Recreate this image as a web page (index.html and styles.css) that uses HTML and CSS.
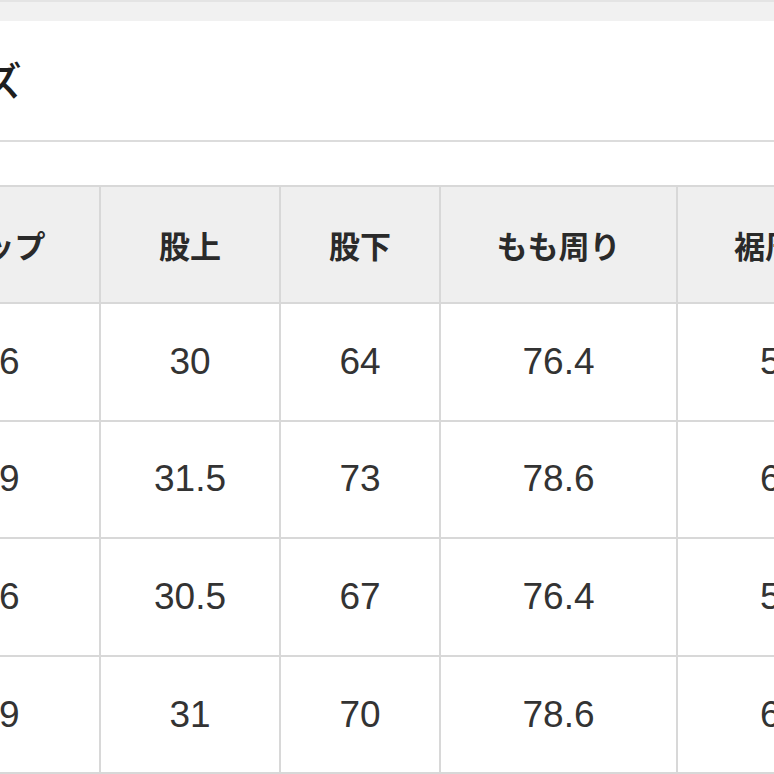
FILE: index.html
```html
<!DOCTYPE html>
<html lang="ja">
<head>
<meta charset="utf-8">
<link rel="stylesheet" href="styles.css">
</head>
<body>
<div class="page">
  <div class="topbar"></div>
  <div class="title-bar">
    <h2 class="title">サイズ</h2>
  </div>
  <div class="spacer"></div>
  <table class="size-table">
    <colgroup>
      <col class="c1"><col class="c2"><col class="c3"><col class="c4"><col class="c5">
    </colgroup>
    <thead>
      <tr><th>ヒップ</th><th>股上</th><th>股下</th><th>もも周り</th><th>裾周り</th></tr>
    </thead>
    <tbody>
      <tr><td>96</td><td>30</td><td>64</td><td>76.4</td><td>58</td></tr>
      <tr><td>99</td><td>31.5</td><td>73</td><td>78.6</td><td>62</td></tr>
      <tr><td>96</td><td>30.5</td><td>67</td><td>76.4</td><td>58</td></tr>
      <tr><td>99</td><td>31</td><td>70</td><td>78.6</td><td>62</td></tr>
    </tbody>
  </table>
</div>
</body>
</html>
```

FILE: styles.css
```css
html, body {
  margin: 0;
  padding: 0;
  background: #ffffff;
}
body {
  width: 774px;
  height: 774px;
  overflow: hidden;
  font-family: "Liberation Sans", "Noto Sans CJK JP", sans-serif;
  color: #2e2e2e;
}
.page {
  width: 774px;
}
.topbar {
  height: 19px;
  background: #f1f1f1;
  border-top: 2px solid #e4e4e4;
}
.title-bar {
  height: 119px;
  display: flex;
  align-items: center;
  border-bottom: 2px solid #dcdcdc;
}
.title {
  margin: -4px 0 0 -97px;
  font-size: 40px;
  font-weight: 500;
  color: #1e1e1e;
  font-family: "Noto Sans CJK JP", sans-serif;
  line-height: 1;
}
.spacer {
  height: 43px;
}
.size-table {
  border-collapse: collapse;
  table-layout: fixed;
  margin-left: -103px;
  width: 986px;
}
.c1 { width: 202px; }
.c2 { width: 180px; }
.c3 { width: 160px; }
.c4 { width: 237px; }
.c5 { width: 207px; }
.size-table th,
.size-table td {
  border: 2px solid #d8d8d8;
  padding: 0;
  text-align: center;
  vertical-align: middle;
  white-space: nowrap;
}
.size-table th {
  height: 115px;
  background: #efefef;
  font-family: "Noto Sans CJK JP", sans-serif;
  font-weight: bold;
  font-size: 31px;
  color: #2a2a2a;
}
.size-table td {
  height: 115.6px;
  font-size: 37px;
  color: #333;
}
```
